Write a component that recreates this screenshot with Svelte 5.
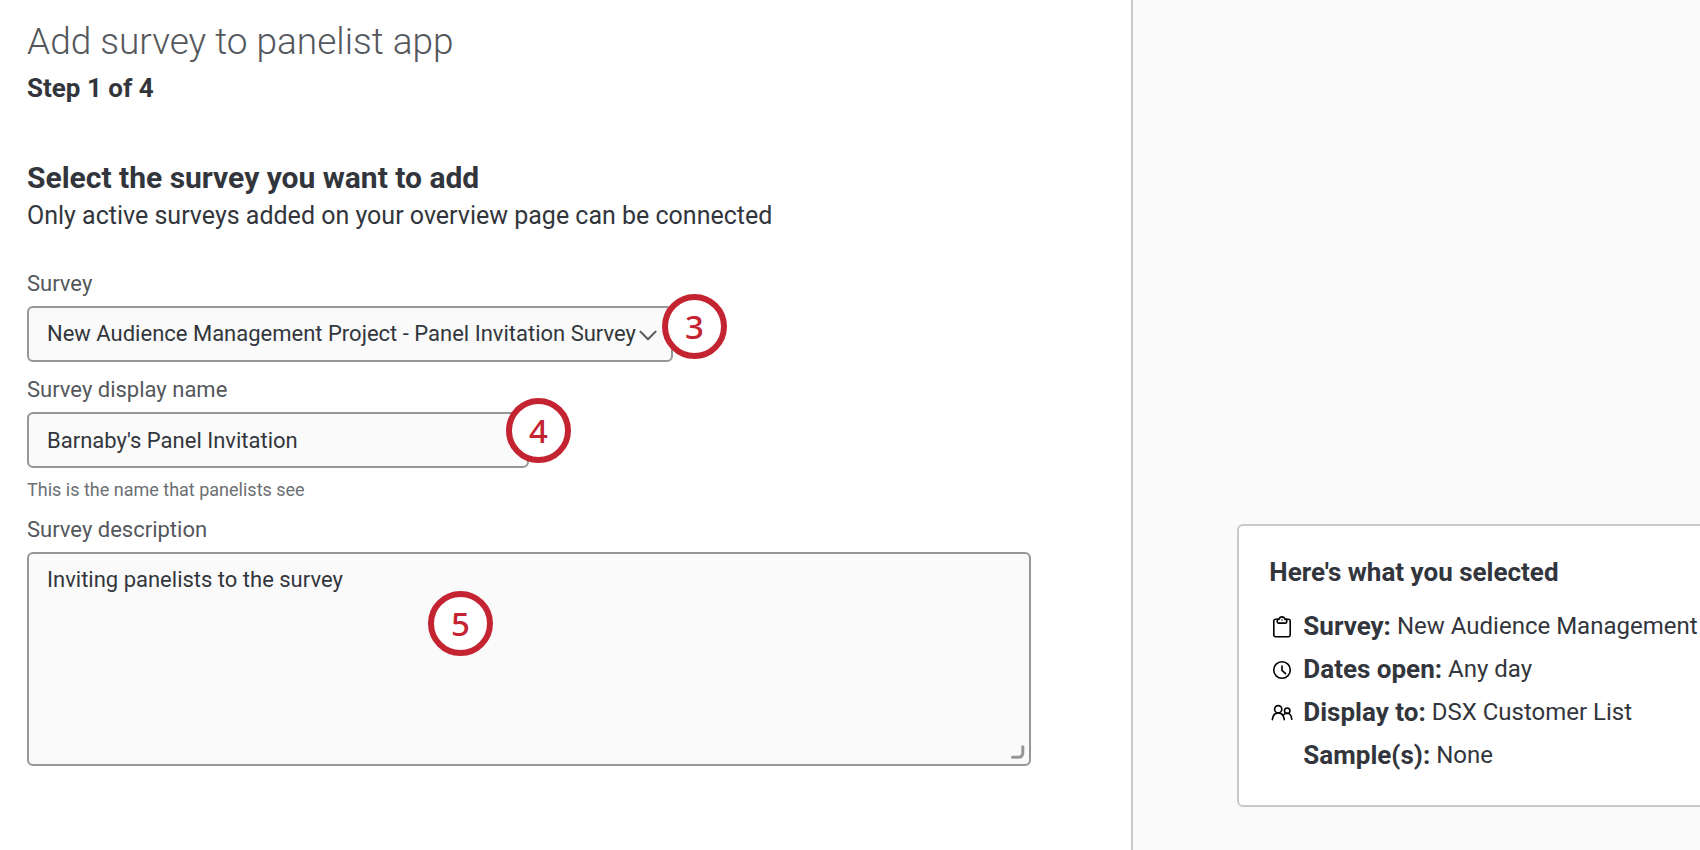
<script>
	let survey = $state("panel-invitation");
	let displayName = $state("Barnaby's Panel Invitation");
	let description = $state("Inviting panelists to the survey");

	const surveys = [
		{ id: "panel-invitation", name: "New Audience Management Project - Panel Invitation Survey" }
	];

	const summary = [
		{ icon: "clipboard", label: "Survey:", value: "New Audience Management" },
		{ icon: "clock", label: "Dates open:", value: "Any day" },
		{ icon: "people", label: "Display to:", value: "DSX Customer List" },
		{ icon: "", label: "Sample(s):", value: "None" }
	];
</script>

<div class="page">
	<main>
		<h1>Add survey to panelist app</h1>
		<p class="step">Step 1 of 4</p>

		<h2>Select the survey you want to add</h2>
		<p class="intro">Only active surveys added on your overview page can be connected</p>

		<form>
			<div class="field">
				<label for="survey">Survey</label>
				<div class="control survey-control">
					<select id="survey" bind:value={survey}>
						{#each surveys as item}
							<option value={item.id}>{item.name}</option>
						{/each}
					</select>
					<svg class="chevron" viewBox="0 0 18 11" aria-hidden="true">
						<path d="M1.4 1.6 9 9.2l7.6-7.6" />
					</svg>
					<span class="badge badge-edge">3</span>
				</div>
			</div>

			<div class="field">
				<label for="display-name">Survey display name</label>
				<div class="control name-control">
					<input id="display-name" type="text" bind:value={displayName} aria-describedby="name-hint">
					<span class="badge badge-corner">4</span>
				</div>
				<p class="hint" id="name-hint">This is the name that panelists see</p>
			</div>

			<div class="field">
				<label for="description">Survey description</label>
				<div class="control">
					<textarea id="description" bind:value={description}></textarea>
					<svg class="grip" viewBox="0 0 14 14" aria-hidden="true">
						<path d="M1.5 12.2H7q4.8 0 4.8-4.8V1.8" />
					</svg>
					<span class="badge badge-inside">5</span>
				</div>
			</div>
		</form>
	</main>

	<aside>
		<section class="card">
			<h3>Here's what you selected</h3>
			<dl>
				{#each summary as item}
					<div class="row">
						<span class="icon">
							{#if item.icon === "clipboard"}
								<svg viewBox="0 0 22 22" aria-hidden="true">
									<path d="M6.5 3.3H4.4a1.6 1.6 0 0 0-1.6 1.6v14.2a1.6 1.6 0 0 0 1.6 1.6h13.2a1.6 1.6 0 0 0 1.6-1.6V4.9a1.6 1.6 0 0 0-1.6-1.6h-2.1" />
									<path d="M6.3 3.4h1.5C8.4 1.8 9.5.9 11 .9s2.6.9 3.2 2.5h1.5v2.5a1.2 1.2 0 0 1-1.2 1.2h-7a1.2 1.2 0 0 1-1.2-1.2z" />
									<circle class="dot" cx="11" cy="4" r="0.8" />
								</svg>
							{:else if item.icon === "clock"}
								<svg viewBox="0 0 22 22" aria-hidden="true">
									<circle cx="11" cy="11" r="8.3" />
									<path d="M11 7v4.3l3.6 3.4" />
								</svg>
							{:else if item.icon === "people"}
								<svg viewBox="0 0 22 22" aria-hidden="true">
									<circle cx="7.2" cy="7.2" r="3.6" />
									<circle cx="16.2" cy="8.7" r="2.7" />
									<path d="M1.3 17.6c.6-4.2 2.8-6.7 6-6.7s5.4 2.5 6 6.7" />
									<path d="M12.7 12.8c1-1 2.2-1.5 3.5-1.5 2.6 0 4.2 2.3 4.6 6" />
								</svg>
							{/if}
						</span>
						<dt>{item.label}</dt>
						<dd>{item.value}</dd>
					</div>
				{/each}
			</dl>
		</section>
	</aside>
</div>

<style>
	:global(body) {
		background: #fff;
		color: #32363c;
		font-family: Roboto, "Liberation Sans", sans-serif;
		margin: 0;
	}

	.page {
		display: grid;
		grid-template-columns: minmax(0, 2fr) minmax(0, 1fr);
		min-height: 100vh;
	}

	main {
		border-right: 2px solid #c8c8c8;
		padding: 18px 100px 32px 27px;
	}

	h1,
	h2,
	h3,
	p,
	dl,
	dd {
		margin: 0;
	}

	h1 {
		color: #54575c;
		font-size: 37px;
		font-weight: 300;
		line-height: 48px;
	}

	.step {
		font-size: 26px;
		font-weight: 700;
		line-height: 44px;
	}

	h2 {
		font-size: 30px;
		font-weight: 700;
		line-height: 40px;
		margin-top: 48px;
	}

	.intro {
		font-size: 25px;
		line-height: 36px;
	}

	form {
		display: grid;
		gap: 12px;
		margin-top: 34px;
	}

	label {
		color: #54575c;
		display: block;
		font-size: 22px;
		line-height: 32px;
		margin-bottom: 6px;
	}

	.control {
		position: relative;
	}

	.survey-control {
		max-width: 646px;
	}

	.name-control {
		max-width: 502px;
	}

	select,
	input,
	textarea {
		appearance: none;
		background: #fafafa;
		border: 2px solid #969696;
		border-radius: 6px;
		box-sizing: border-box;
		color: #32363c;
		display: block;
		font-family: inherit;
		font-size: 22px;
		height: 56px;
		line-height: 32px;
		padding: 10px 18px;
		width: 100%;
	}

	select {
		padding-right: 32px;
	}

	textarea {
		height: 214px;
		resize: none;
	}

	.chevron {
		fill: none;
		height: 11px;
		pointer-events: none;
		position: absolute;
		right: 16px;
		stroke: #54575c;
		stroke-linecap: round;
		stroke-linejoin: round;
		stroke-width: 2;
		top: 24px;
		width: 18px;
	}

	.grip {
		bottom: 7px;
		fill: none;
		height: 14px;
		pointer-events: none;
		position: absolute;
		right: 6px;
		stroke: #969696;
		stroke-linecap: round;
		stroke-width: 3;
		width: 14px;
	}

	.badge {
		align-items: center;
		background: #fff;
		border: 6px solid #c42331;
		border-radius: 50%;
		box-sizing: border-box;
		color: #c42331;
		display: flex;
		font-family: "Noto Sans", "Open Sans", sans-serif;
		font-size: 33px;
		font-weight: 500;
		height: 65px;
		justify-content: center;
		line-height: 48px;
		position: absolute;
		width: 65px;
	}

	.badge-edge {
		right: -54px;
		top: -12px;
	}

	.badge-corner {
		right: -42px;
		top: -14px;
	}

	.badge-inside {
		left: 401px;
		top: 39px;
	}

	.hint {
		color: #6c6f73;
		font-size: 18px;
		line-height: 24px;
		margin-top: 10px;
	}

	aside {
		background: #fafafa;
		box-sizing: border-box;
		display: flex;
		flex-direction: column;
		justify-content: flex-end;
		overflow: hidden;
		padding: 44px 0 43px 104px;
	}

	.card {
		background: #fff;
		border: 2px solid #c8c8c8;
		border-radius: 6px;
		padding: 28px 30px;
		white-space: nowrap;
		width: 600px;
	}

	h3 {
		font-size: 26px;
		font-weight: 700;
		line-height: 36px;
		margin-bottom: 15px;
	}

	.row {
		align-items: center;
		display: flex;
		font-size: 24px;
		line-height: 43px;
	}

	.icon {
		display: flex;
		justify-content: flex-end;
		margin-right: 10px;
		width: 24px;
	}

	.icon svg {
		fill: none;
		height: 22px;
		stroke: #000;
		stroke-linecap: round;
		stroke-linejoin: round;
		stroke-width: 1.6;
		width: 22px;
	}

	.icon .dot {
		fill: #000;
		stroke: none;
	}

	dt {
		font-size: 26px;
		font-weight: 700;
		margin-right: 6px;
	}
</style>
